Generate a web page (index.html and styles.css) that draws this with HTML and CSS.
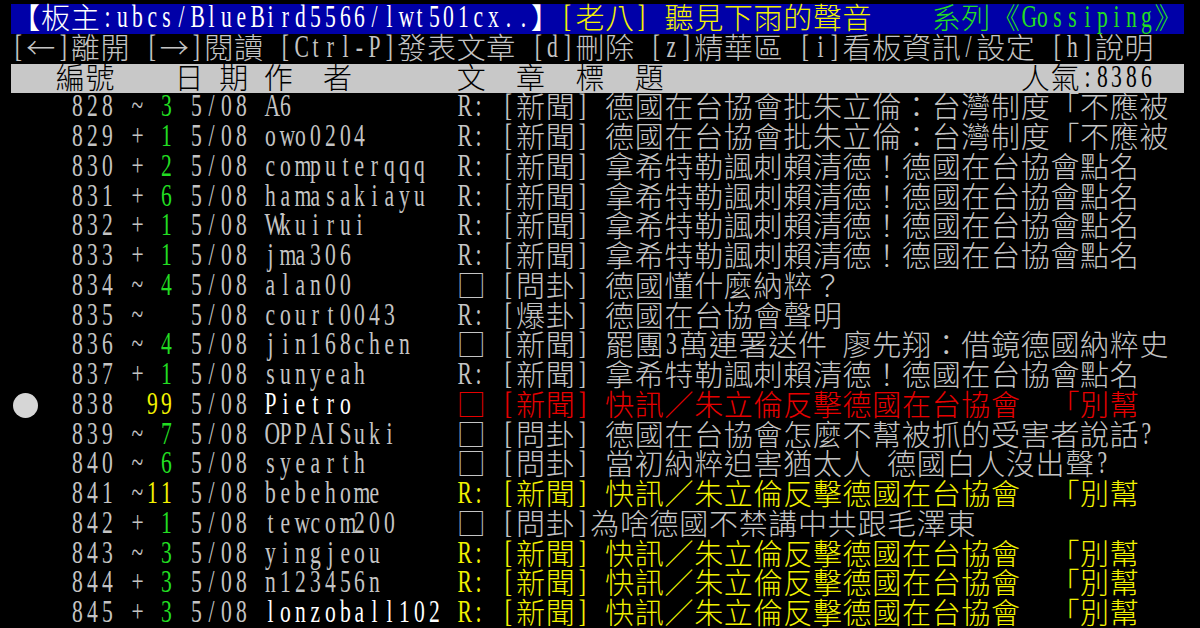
FILE: index.html
```html
<!DOCTYPE html>
<html lang="zh-Hant">
<head>
    <meta charset="UTF-8">
    <title>PTT Gossiping</title>
    <link rel="stylesheet" href="styles.css">
</head>
<body>
    <div class="term">
<div class="line bar-title"><span class="wt">【板主:ubcs/BlueBird5566/lwt501cx..】</span><span class="y">[老八] 聽見下雨的聲音</span>    <span class="g">系列《Gossiping》</span></div>
<div class="line">[←]離開 [→]閱讀 [Ctrl-P]發表文章 [d]刪除 [z]精華區 [i]看板資訊/設定 [h]說明</div>
<div class="line bar-head">   編號    日 期 作  者       文  章  標  題                        人氣:8386  </div>
<div class="line">    828 ~ <span class="g">3</span> 5/08 A6           R: [新聞] 德國在台協會批朱立倫：台灣制度「不應被</div>
<div class="line">    829 + <span class="g">1</span> 5/08 owo0204      R: [新聞] 德國在台協會批朱立倫：台灣制度「不應被</div>
<div class="line">    830 + <span class="g">2</span> 5/08 computerqqq  R: [新聞] 拿希特勒諷刺賴清德！德國在台協會點名</div>
<div class="line">    831 + <span class="g">6</span> 5/08 hamasakiayu  R: [新聞] 拿希特勒諷刺賴清德！德國在台協會點名</div>
<div class="line">    832 + <span class="g">1</span> 5/08 Wkuirui      R: [新聞] 拿希特勒諷刺賴清德！德國在台協會點名</div>
<div class="line">    833 + <span class="g">1</span> 5/08 jma306       R: [新聞] 拿希特勒諷刺賴清德！德國在台協會點名</div>
<div class="line">    834 ~ <span class="g">4</span> 5/08 alan00       □ [問卦] 德國懂什麼納粹？</div>
<div class="line">    835 ~   5/08 court0043    R: [爆卦] 德國在台協會聲明</div>
<div class="line">    836 ~ <span class="g">4</span> 5/08 jin168chen   □ [新聞] 罷團3萬連署送件 廖先翔：借鏡德國納粹史</div>
<div class="line">    837 + <span class="g">1</span> 5/08 sunyeah      R: [新聞] 拿希特勒諷刺賴清德！德國在台協會點名</div>
<div class="line"><span class="cursor"></span>  838  <span class="y">99</span> 5/08 <span class="wt">Pietro</span>       <span class="r">□ [新聞] 快訊／朱立倫反擊德國在台協會  「別幫</span></div>
<div class="line">    839 ~ <span class="g">7</span> 5/08 OPPAISuki    □ [問卦] 德國在台協會怎麼不幫被抓的受害者說話?</div>
<div class="line">    840 ~ <span class="g">6</span> 5/08 syearth      □ [問卦] 當初納粹迫害猶太人 德國白人沒出聲?</div>
<div class="line">    841 ~<span class="y">11</span> 5/08 bebehome     <span class="y">R: [新聞] 快訊／朱立倫反擊德國在台協會  「別幫</span></div>
<div class="line">    842 + <span class="g">1</span> 5/08 tewcom200    □ [問卦]為啥德國不禁講中共跟毛澤東</div>
<div class="line">    843 ~ <span class="g">3</span> 5/08 yingjeou     <span class="y">R: [新聞] 快訊／朱立倫反擊德國在台協會  「別幫</span></div>
<div class="line">    844 + <span class="g">3</span> 5/08 n123456n     <span class="y">R: [新聞] 快訊／朱立倫反擊德國在台協會  「別幫</span></div>
<div class="line">    845 + <span class="g">3</span> 5/08 <span class="wt">lonzoball102</span> <span class="y">R: [新聞] 快訊／朱立倫反擊德國在台協會  「別幫</span></div>
    </div>

    <script>
        // 把每個字放進終端機的格子：半形一格，全形兩格
        var wide = /[^\x00-\x7f]/;

        function toCells(el) {
            Array.prototype.slice.call(el.childNodes).forEach(function (node) {
                if (node.nodeType === 3) {
                    var frag = document.createDocumentFragment();
                    for (var ch of node.nodeValue) {
                        var cell = document.createElement('span');
                        cell.className = wide.test(ch) ? 'f' : 'h';
                        cell.textContent = ch;
                        frag.appendChild(cell);
                    }
                    el.replaceChild(frag, node);
                } else if (node.nodeType === 1) {
                    toCells(node);
                }
            });
        }

        document.querySelectorAll('.line').forEach(toCells);
    </script>
</body>
</html>
```

FILE: styles.css
```css
body {
    margin: 0;
    background-color: #000;
    overflow: hidden;
}
.term {
    padding: 4px 0 0 11px;
    color: #c4c4c4;
}
.line {
    height: 29.75px;
    font-size: 0;
    white-space: pre;
}
.bar-title {
    width: 1173px;
    background-color: #0000a8;
    color: #fff;
}
.bar-head {
    width: 1173px;
    background-color: #c8c8c8;
    color: #000;
}
/* half-width cell: a narrowed serif, like the terminal's Ming font */
.h {
    display: inline-block;
    vertical-align: top;
    width: 14.85px;
    height: 29.75px;
    text-align: center;
    font-family: "Liberation Serif", serif;
    font-size: 27px;
    line-height: 29.75px;
    transform-origin: 50% 24px;
    transform: scale(0.8, 1.2);
}
/* full-width cell */
.f {
    display: inline-block;
    vertical-align: top;
    width: 29.7px;
    height: 29.75px;
    text-align: center;
    font-family: "Noto Sans CJK TC", sans-serif;
    font-weight: 300;
    font-size: 29px;
    line-height: 24.8px;
}
.g {
    color: #22dd22;
}
.y {
    color: #f2f200;
}
.r {
    color: #e60000;
}
.wt {
    color: #fff;
}
.cursor {
    display: inline-flex;
    align-items: center;
    justify-content: center;
    vertical-align: top;
    width: 29.7px;
    height: 29.75px;
}
.cursor::after {
    content: "";
    width: 25px;
    height: 25px;
    border-radius: 50%;
    background-color: #d6d6d6;
}
```
